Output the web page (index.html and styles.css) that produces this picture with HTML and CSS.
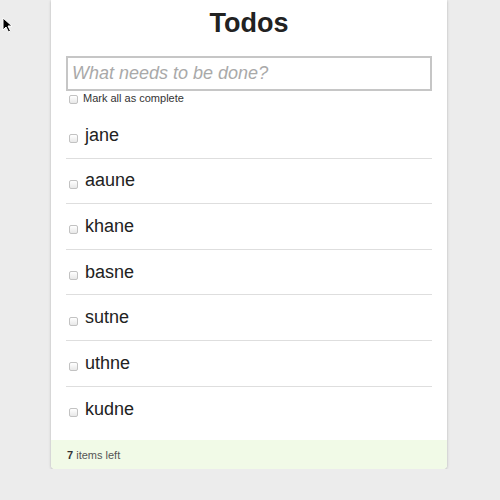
FILE: index.html
```html
<!DOCTYPE html>
<html>
<head>
<meta charset="utf-8">
<link rel="stylesheet" href="styles.css">
</head>
<body>
<svg class="cursor" width="12" height="16" viewBox="0 0 12 16"><path d="M1 1 L1 13 L4 10 L6.5 15 L8.5 14 L6 9 L10 9 Z" fill="#000" stroke="#fff" stroke-width="1"/></svg>
<div class="card">
  <h1 class="title">Todos</h1>
  <div class="input">What needs to be done?</div>
  <div class="markall"><span class="cb"></span><span>Mark all as complete</span></div>
  <ul class="list">
    <li class="item"><span class="cb item-cb"></span><span>jane</span></li>
    <li class="item"><span class="cb item-cb"></span><span>aaune</span></li>
    <li class="item"><span class="cb item-cb"></span><span>khane</span></li>
    <li class="item"><span class="cb item-cb"></span><span>basne</span></li>
    <li class="item"><span class="cb item-cb"></span><span>sutne</span></li>
    <li class="item"><span class="cb item-cb"></span><span>uthne</span></li>
    <li class="item"><span class="cb item-cb"></span><span>kudne</span></li>
  </ul>
  <div class="footer"><b>7</b> items left</div>
</div>
</body>
</html>
```
FILE: styles.css
```css
html, body {
  margin: 0;
  padding: 0;
  background: #ececec;
  font-family: "Liberation Sans", Arial, sans-serif;
  color: #222;
}
.cursor {
  position: absolute;
  left: 2px;
  top: 17px;
}
.card {
  width: 396px;
  margin-left: 51px;
  background: #fff;
  border-radius: 0 0 4px 4px;
  box-shadow: 0 1px 3px rgba(0,0,0,0.22), 0 0 1px rgba(0,0,0,0.12);
}
.title {
  margin: 0;
  font-size: 27px;
  line-height: 47px;
  font-weight: bold;
  text-align: center;
  color: #222;
}
.input {
  margin: 9px 15px 0 15px;
  height: 35px;
  box-sizing: border-box;
  border: 2px solid #c6c6c6;
  padding-left: 4px;
  font-size: 18px;
  line-height: 31px;
  font-style: italic;
  color: #a9a9a9;
}
.markall {
  margin: 1px 15px 0 18px;
  display: flex;
  align-items: center;
  gap: 5px;
  font-size: 11px;
  line-height: 13px;
  color: #333;
}
.cb {
  display: inline-block;
  width: 9px;
  height: 9px;
  box-sizing: border-box;
  border: 1px solid #c2c2c2;
  border-radius: 2px;
  background: linear-gradient(#fff, #e8e8e8);
  margin-top: 2px;
}
.list {
  list-style: none;
  margin: 8px 15px 0 15px;
  padding: 0 0 8px 0;
}
.item {
  height: 45.6px;
  box-sizing: border-box;
  border-bottom: 1px solid #dedede;
  display: flex;
  align-items: center;
  padding-left: 3px;
  gap: 7px;
  font-size: 18px;
  color: #222;
}
.item:last-child {
  border-bottom: none;
}
.item-cb {
  margin-top: 7px;
}
.footer {
  height: 29px;
  line-height: 31px;
  background: #f1fae7;
  padding-left: 16px;
  font-size: 11px;
  color: #555;
  border-radius: 0 0 4px 4px;
}
.footer b {
  color: #333;
}
```
